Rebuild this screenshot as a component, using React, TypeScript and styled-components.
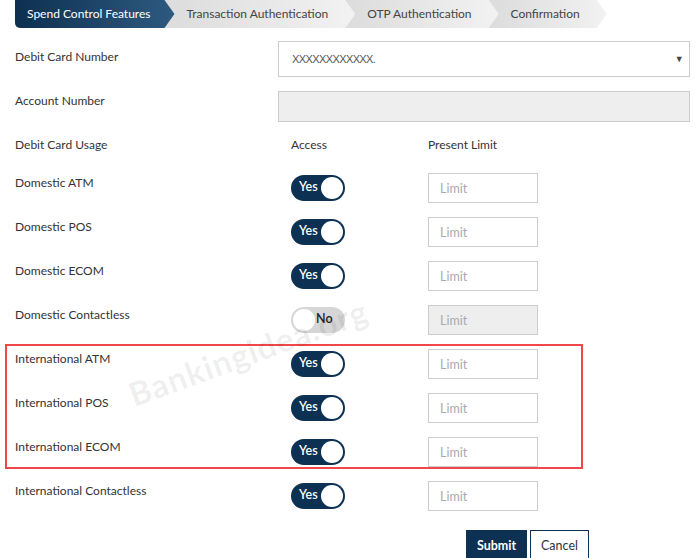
import styled, { createGlobalStyle } from "styled-components"

const GlobalStyle = createGlobalStyle`
  html, body {
    margin: 0;
    padding: 0;
    background: #fff;
  }
  body {
    font-family: "Lato", "Open Sans", "Liberation Sans", sans-serif;
    color: #333;
    font-size: 12px;
  }
  * {
    box-sizing: border-box;
  }
`

const steps = [
  "Spend Control Features",
  "Transaction Authentication",
  "OTP Authentication",
  "Confirmation",
]

type Usage = {
  label: string
  on: boolean
  disabled?: boolean
}

const domestic: Usage[] = [
  { label: "Domestic ATM", on: true },
  { label: "Domestic POS", on: true },
  { label: "Domestic ECOM", on: true },
  { label: "Domestic Contactless", on: false, disabled: true },
]

const international: Usage[] = [
  { label: "International ATM", on: true },
  { label: "International POS", on: true },
  { label: "International ECOM", on: true },
]

const UsageRow = ({ label, on, disabled }: Usage) => (
  <Row>
    <Label $top={1}>{label}</Label>
    <AccessCell>
      <Toggle $on={on}>
        <ToggleText $on={on}>{on ? "Yes" : "No"}</ToggleText>
        <Knob $on={on} />
      </Toggle>
    </AccessCell>
    <LimitInput placeholder="Limit" disabled={disabled} />
  </Row>
)

export default function App() {
  return (
    <Page>
      <GlobalStyle />
      <Stepper>
        {steps.map((s, i) => (
          <Step key={s} $active={i === 0} $first={i === 0}>
            {s}
          </Step>
        ))}
      </Stepper>

      <Form>
        <Row $height={36}>
          <Label $top={7}>Debit Card Number</Label>
          <Select>
            <span>XXXXXXXXXXXX.</span>
            <Caret>▼</Caret>
          </Select>
        </Row>

        <Row $height={31}>
          <Label $top={1}>Account Number</Label>
          <WideInput disabled />
        </Row>

        <HeaderRow>
          <span>Debit Card Usage</span>
          <HeaderCell>Access</HeaderCell>
          <span>Present Limit</span>
        </HeaderRow>

        <Rows>
          {domestic.map((u) => (
            <UsageRow key={u.label} {...u} />
          ))}

          <Highlight>
            {international.map((u) => (
              <UsageRow key={u.label} {...u} />
            ))}
          </Highlight>

          <UsageRow label="International Contactless" on />
        </Rows>

        <Actions>
          <SubmitButton>Submit</SubmitButton>
          <CancelButton>Cancel</CancelButton>
        </Actions>
      </Form>

      <Watermark>Bankingidea.org</Watermark>
    </Page>
  )
}

const Page = styled.div`
  position: relative;
  width: 698px;
  height: 558px;
  overflow: hidden;
  padding-left: 15px;
`

const Stepper = styled.div`
  display: flex;
  height: 28px;
`

const Step = styled.div<{ $active: boolean; $first: boolean }>`
  display: flex;
  align-items: center;
  height: 28px;
  padding: 0 ${({ $first }) => ($first ? "24px" : "27px")} 1px
    ${({ $first }) => ($first ? "12px" : "22px")};
  margin-left: ${({ $first }) => ($first ? "0" : "-10px")};
  font-size: 12px;
  white-space: nowrap;
  color: ${({ $active }) => ($active ? "#fff" : "#444")};
  background: ${({ $active }) =>
    $active
      ? "linear-gradient(to right, #0d3050, #2e5a80)"
      : "linear-gradient(to right, #dcdcdc, #f2f2f2)"};
  border-bottom-left-radius: ${({ $first }) => ($first ? "5px" : "0")};
  clip-path: ${({ $first }) =>
    $first
      ? "polygon(0 0, calc(100% - 10px) 0, 100% 50%, calc(100% - 10px) 100%, 0 100%)"
      : "polygon(0 0, calc(100% - 10px) 0, 100% 50%, calc(100% - 10px) 100%, 0 100%, 10px 50%)"};
  position: relative;
  z-index: ${({ $first }) => ($first ? 2 : 1)};
`

const Form = styled.div`
  display: flex;
  flex-direction: column;
  gap: 14px;
  margin-top: 13px;
`

const Row = styled.div<{ $height?: number }>`
  display: grid;
  grid-template-columns: 263px 150px 1fr;
  align-items: start;
  height: ${({ $height }) => $height ?? 30}px;
`

const Label = styled.div<{ $top: number }>`
  padding-top: ${({ $top }) => $top}px;
  line-height: 18px;
  color: #333;
`

const Select = styled.div`
  grid-column: 2 / 4;
  width: 412px;
  height: 36px;
  border: 1px solid #ccc;
  display: flex;
  align-items: center;
  justify-content: space-between;
  padding: 0 6px 0 13px;
  font-family: "Liberation Sans", sans-serif;
  font-size: 11px;
  letter-spacing: -0.6px;
  color: #555;
`

const Caret = styled.span`
  font-size: 9px;
  color: #444;
`

const WideInput = styled.input`
  grid-column: 2 / 4;
  width: 412px;
  height: 31px;
  border: 1px solid #ccc;
  background: #eee;
  outline: none;
`

const HeaderRow = styled.div`
  display: grid;
  grid-template-columns: 263px 150px 1fr;
  line-height: 18px;
  height: 18px;
  margin-bottom: 5px;
  color: #333;
`

const HeaderCell = styled.span`
  padding-left: 13px;
`

const Rows = styled.div`
  display: flex;
  flex-direction: column;
  gap: 14px;
`

const Highlight = styled.div`
  display: flex;
  flex-direction: column;
  gap: 14px;
  margin: -5px 0 -2px -10px;
  width: 578px;
  height: 125px;
  padding: 3px 0 0 8px;
  border: 2px solid #f04848;
`

const AccessCell = styled.div`
  padding: 2px 0 0 13px;
`

const Toggle = styled.div<{ $on: boolean }>`
  position: relative;
  width: 54px;
  height: 26px;
  border-radius: 13px;
  background: ${({ $on }) => ($on ? "#0c3152" : "#d6d6d6")};
  display: flex;
  align-items: center;
`

const ToggleText = styled.span<{ $on: boolean }>`
  font-size: 12.5px;
  font-weight: 600;
  line-height: 1;
  margin-top: -2px;
  color: ${({ $on }) => ($on ? "#fff" : "#222")};
  margin-left: ${({ $on }) => ($on ? "8px" : "25px")};
`

const Knob = styled.span<{ $on: boolean }>`
  position: absolute;
  top: 2px;
  left: ${({ $on }) => ($on ? "30px" : "2px")};
  width: 22px;
  height: 22px;
  border-radius: 50%;
  background: #fff;
`

const LimitInput = styled.input`
  width: 110px;
  height: 30px;
  border: 1px solid #ccc;
  padding: 0 11px;
  font-family: inherit;
  font-size: 12.5px;
  color: #333;
  background: #fff;
  outline: none;

  &::placeholder {
    color: #aaa;
  }

  &:disabled {
    background: #eee;
  }
`

const Actions = styled.div`
  display: flex;
  gap: 3px;
  margin: 5px 0 0 451px;
`

const SubmitButton = styled.button`
  width: 61px;
  height: 30px;
  border: 1px solid #0c3152;
  background: #0c3152;
  color: #fff;
  font-family: inherit;
  font-size: 12.5px;
  font-weight: 700;
  padding: 0;
`

const CancelButton = styled.button`
  width: 59px;
  height: 30px;
  border: 1px solid #0c3152;
  background: #fff;
  color: #333;
  font-family: inherit;
  font-size: 12.5px;
  padding: 0;
`

const Watermark = styled.div`
  position: absolute;
  left: 248px;
  top: 352px;
  transform: translate(-50%, -50%) rotate(-20deg);
  font-size: 33px;
  font-weight: 700;
  letter-spacing: 1px;
  color: rgba(0, 0, 0, 0.07);
  white-space: nowrap;
  pointer-events: none;
`
